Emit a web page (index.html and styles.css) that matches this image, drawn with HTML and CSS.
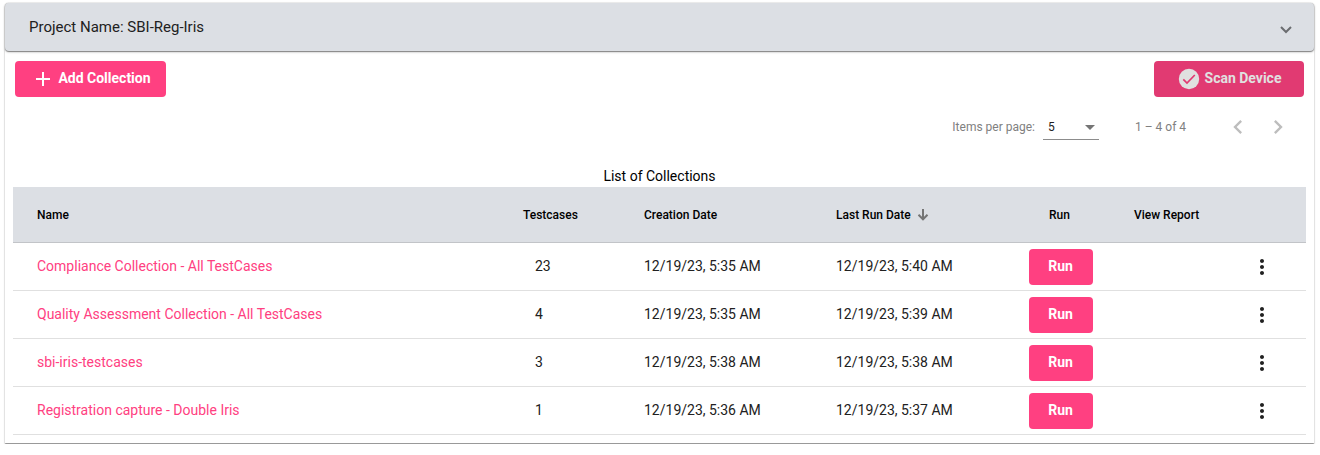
FILE: index.html
```html
<!DOCTYPE html>
<html lang="en">
<head>
<meta charset="utf-8">
<title>Project Collections</title>
<link rel="stylesheet" href="styles.css">
</head>
<body>
<main class="panel">
  <header class="panel-header">
    <span>Project Name: SBI-Reg-Iris</span>
    <svg class="chevron" width="12" height="8" viewBox="0 0 12 8"><path d="M1 1l5 5 5-5" fill="none" stroke="#6b6d70" stroke-width="2"/></svg>
  </header>
  <div class="toolbar">
    <button class="btn add"><svg width="24" height="24" viewBox="0 0 24 24"><path d="M19 13h-6v6h-2v-6H5v-2h6V5h2v6h6v2z" fill="currentColor"/></svg><span>Add Collection</span></button>
    <button class="btn scan"><svg width="24" height="24" viewBox="0 0 24 24"><circle cx="12" cy="12" r="10.200" fill="currentColor"/><path d="M6.300 12.300l3.700 3.700 7.800-8" fill="none" stroke="#e13a72" stroke-width="1.700"/></svg><span>Scan Device</span></button>
  </div>
  <div class="paginator">
    <span class="per-page">Items per page:</span>
    <span class="select"><span>5</span><i class="caret"></i></span>
    <span class="range">1 – 4 of 4</span>
    <svg class="nav" width="28" height="28" viewBox="0 0 24 24"><path d="M15.410 7.410L14 6l-6 6 6 6 1.410-1.410L10.830 12z" fill="currentColor"/></svg>
    <svg class="nav" width="28" height="28" viewBox="0 0 24 24"><path d="M10 6L8.590 7.410 13.170 12l-4.580 4.590L10 18l6-6z" fill="currentColor"/></svg>
  </div>
  <h1 class="title">List of Collections</h1>
  <section class="table">
    <div class="row head">
      <span>Name</span><span>Testcases</span><span>Creation Date</span>
      <span class="sorted">Last Run Date<svg width="12" height="12" viewBox="0 0 12 12"><path d="M6 0v10M1.500 5.800L6 10.300l4.500-4.500" fill="none" stroke="#757575" stroke-width="2"/></svg></span>
      <span class="run">Run</span><span>View Report</span><span></span>
    </div>
    <div class="row">
      <a class="link">Compliance Collection - All TestCases</a><span class="count">23</span><span class="date">12/19/23, 5:35 AM</span><span class="date">12/19/23, 5:40 AM</span><button class="btn run-btn"><span>Run</span></button><span></span>
      <svg class="more" width="24" height="24" viewBox="0 0 24 24"><path d="M12 8c1.100 0 2-.9 2-2s-.9-2-2-2-2 .9-2 2 .9 2 2 2zm0 2c-1.100 0-2 .9-2 2s.9 2 2 2 2-.9 2-2-.9-2-2-2zm0 6c-1.100 0-2 .9-2 2s.9 2 2 2 2-.9 2-2-.9-2-2-2z"/></svg>
    </div>
    <div class="row">
      <a class="link">Quality Assessment Collection - All TestCases</a><span class="count">4</span><span class="date">12/19/23, 5:35 AM</span><span class="date">12/19/23, 5:39 AM</span><button class="btn run-btn"><span>Run</span></button><span></span>
      <svg class="more" width="24" height="24" viewBox="0 0 24 24"><path d="M12 8c1.100 0 2-.9 2-2s-.9-2-2-2-2 .9-2 2 .9 2 2 2zm0 2c-1.100 0-2 .9-2 2s.9 2 2 2 2-.9 2-2-.9-2-2-2zm0 6c-1.100 0-2 .9-2 2s.9 2 2 2 2-.9 2-2-.9-2-2-2z"/></svg>
    </div>
    <div class="row">
      <a class="link">sbi-iris-testcases</a><span class="count">3</span><span class="date">12/19/23, 5:38 AM</span><span class="date">12/19/23, 5:38 AM</span><button class="btn run-btn"><span>Run</span></button><span></span>
      <svg class="more" width="24" height="24" viewBox="0 0 24 24"><path d="M12 8c1.100 0 2-.9 2-2s-.9-2-2-2-2 .9-2 2 .9 2 2 2zm0 2c-1.100 0-2 .9-2 2s.9 2 2 2 2-.9 2-2-.9-2-2-2zm0 6c-1.100 0-2 .9-2 2s.9 2 2 2 2-.9 2-2-.9-2-2-2z"/></svg>
    </div>
    <div class="row">
      <a class="link">Registration capture - Double Iris</a><span class="count">1</span><span class="date">12/19/23, 5:36 AM</span><span class="date">12/19/23, 5:37 AM</span><button class="btn run-btn"><span>Run</span></button><span></span>
      <svg class="more" width="24" height="24" viewBox="0 0 24 24"><path d="M12 8c1.100 0 2-.9 2-2s-.9-2-2-2-2 .9-2 2 .9 2 2 2zm0 2c-1.100 0-2 .9-2 2s.9 2 2 2 2-.9 2-2-.9-2-2-2zm0 6c-1.100 0-2 .9-2 2s.9 2 2 2 2-.9 2-2-.9-2-2-2z"/></svg>
    </div>
  </section>
</main>
</body>
</html>
```

FILE: styles.css
```css
* { box-sizing: border-box; }
body {
  margin: 0;
  padding: 3px 6px 0 5px;
  background: #fff;
  color: #212121;
  font: 14px/20px Roboto, sans-serif;
}
.panel {
  height: 441px;
  border-bottom: 1px solid #999;
  border-radius: 4px 4px 1px 1px;
  box-shadow: 0 1px 2px rgba(0,0,0,.25), 0 0 1px rgba(0,0,0,.45);
}
.panel-header {
  display: flex;
  align-items: center;
  justify-content: space-between;
  height: 48px;
  padding: 0 22px 0 24px;
  border-radius: 4px;
  background: #dcdfe4;
  box-shadow: 0 1px 1px rgba(0,0,0,.4), 0 1px 3px rgba(0,0,0,.2);
  font-size: 15px;
}
.chevron { margin-top: 6px; }
.toolbar {
  display: flex;
  justify-content: space-between;
  padding: 10px 10px 0;
}
.btn {
  display: flex;
  align-items: center;
  justify-content: center;
  height: 36px;
  padding: 0;
  border: 0;
  border-radius: 4px;
  background: #ff4081;
  color: #fff;
  font: 700 14px/20px Roboto, sans-serif;
}
.btn span { padding-bottom: 2px; }
.add { width: 151px; gap: 3px; padding-left: 1px; }
.scan { width: 150px; gap: 4px; background: #e13a72; color: #e0e0e0; }
.paginator {
  display: flex;
  align-items: center;
  height: 56px;
  margin-top: 2px;
  padding-right: 22px;
  color: #808080;
  font-size: 12px;
}
.per-page { margin-left: auto; }
.select {
  display: flex;
  align-items: center;
  justify-content: space-between;
  width: 56px;
  height: 25px;
  margin: 0 36px 0 8px;
  padding: 0 4px 0 5px;
  border-bottom: 1px solid #8c8c8c;
  color: #212121;
}
.caret {
  margin-top: 2px;
  border: 5px solid transparent;
  border-top-color: #757575;
  border-bottom: 0;
}
.range { width: 89px; }
.nav { color: #bdbdbd; margin-right: 12px; }
.nav:last-child { margin-right: 0; }
.title {
  margin: 11px 0 0;
  color: #000;
  font-size: 14px;
  font-weight: 400;
  line-height: 20px;
  text-align: center;
}
.table { margin: 1px 8px 0; }
.row {
  display: grid;
  grid-template-columns: 486px 121px 192px 193px 105px 116px 1fr;
  align-items: center;
  height: 48px;
  padding: 0 0 0 24px;
  border-bottom: 1px solid #e0e0e0;
}
.head {
  height: 56px;
  border-color: #c2c4c8;
  background: #dcdfe4;
  color: #000;
  font-size: 12px;
  font-weight: 500;
}
.sorted { display: flex; align-items: center; gap: 6px; }
.run { padding-left: 20px; }
.link { color: #ff4081; }
.link, .count, .date { padding-bottom: 2px; }
.count { padding-left: 12px; }
.run-btn { width: 64px; padding-right: 1px; }
.more { fill: #212121; }
```
